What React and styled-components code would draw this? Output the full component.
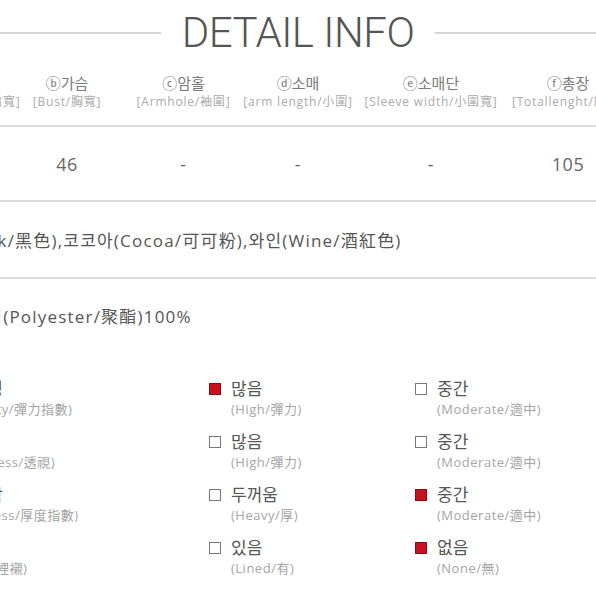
import React from 'react';
import styled, { createGlobalStyle } from 'styled-components';

const GlobalStyle = createGlobalStyle`
  html, body {
    margin: 0;
    padding: 0;
    background: #fff;
    overflow: hidden;
  }
  body {
    font-family: "Open Sans", "Noto Sans CJK KR", sans-serif;
    color: #555;
  }
`;

// the sheet is wider than the window and starts left of it
const Sheet = styled.div`
  width: 736px;
  margin-left: -70px;
`;

const TitleRow = styled.div`
  display: flex;
  align-items: center;
  gap: 21px;
  height: 42px;
  padding-top: 12px;
`;

const Rule = styled.div`
  flex: 1;
  height: 2px;
  background: #d6d6d6;
`;

const Title = styled.h2`
  margin: 0;
  font-family: Roboto, sans-serif;
  font-weight: 300;
  font-size: 42px;
  line-height: 42px;
  letter-spacing: -0.5px;
  color: #555;
`;

const SizeRow = styled.div`
  box-sizing: border-box;
  display: grid;
  grid-template-columns: 72px 118px 115px 114px 152px 122px;
  padding: ${p => p.$pt || 0}px 0 0 6px;
  height: ${p => p.$h}px;
  align-items: center;
  border-bottom: 2px solid #dcdcdc;
`;

const HeadCell = styled.div`
  display: flex;
  flex-direction: column;
  align-items: center;
  white-space: nowrap;
`;

const HeadLabel = styled.span`
  font-size: 15px;
  line-height: 20px;
  color: #7a7a7a;
`;

const HeadSub = styled.span`
  font-size: 12px;
  line-height: 18px;
  letter-spacing: 0.8px;
  color: #aaa;
`;

const Value = styled.div`
  text-align: center;
  font-size: 18px;
  letter-spacing: 0.5px;
  color: #666;
`;

const InfoRow = styled.div`
  display: flex;
  align-items: center;
  height: ${p => p.$h}px;
  font-size: 17px;
  letter-spacing: 1.2px;
  color: #555;
  white-space: nowrap;
  border-bottom: ${p => (p.$last ? 'none' : '2px solid #dcdcdc')};
`;

const InfoText = styled.span`
  margin-left: ${p => p.$shift}px;
`;

const FeelGrid = styled.div`
  display: grid;
  grid-template-columns: 246px 206px 1fr;
  grid-auto-rows: 53px;
  padding: 27px 0 0 33px;
`;

const TextBlock = styled.div`
  display: flex;
  flex-direction: column;
  white-space: nowrap;
`;

const Category = styled(TextBlock)`
  margin-left: -7px;
`;

const MainText = styled.span`
  font-size: 17px;
  line-height: 22px;
  color: #555;
`;

const SubText = styled.span`
  font-size: 13px;
  line-height: 18px;
  letter-spacing: 0.5px;
  color: #a5a5a5;
`;

const CategorySub = styled(SubText)`
  margin-left: -9px;
`;

const Option = styled.div`
  display: flex;
  align-items: flex-start;
  gap: 10px;
`;

const Box = styled.span`
  box-sizing: border-box;
  width: 12px;
  height: 12px;
  margin-top: 5px;
  flex: none;
  border: 1.5px solid ${p => (p.$on ? '#8e0a14' : '#777')};
  background: ${p => (p.$on ? '#c8101e' : '#fff')};
`;

const heads = [
  ['ⓐ어깨', '[Shoulder/肩寬]'],
  ['ⓑ가슴', '[Bust/胸寬]'],
  ['ⓒ암홀', '[Armhole/袖圍]'],
  ['ⓓ소매', '[arm length/小圍]'],
  ['ⓔ소매단', '[Sleeve width/小圍寬]'],
  ['ⓕ총장', '[Totallenght/總長]'],
];

const values = ['-', '46', '-', '-', '-', '105'];

const feel = [
  {
    name: '신축성', sub: '(Elasticity/彈力指數)',
    a: { on: true, t: '많음', s: '(High/彈力)' },
    b: { on: false, t: '중간', s: '(Moderate/適中)' },
  },
  {
    name: '비침', sub: '(Sheerness/透視)',
    a: { on: false, t: '많음', s: '(High/彈力)' },
    b: { on: false, t: '중간', s: '(Moderate/適中)' },
  },
  {
    name: '두께감', sub: '(Thickness/厚度指數)',
    a: { on: false, t: '두꺼움', s: '(Heavy/厚)' },
    b: { on: true, t: '중간', s: '(Moderate/適中)' },
  },
  {
    name: '안감', sub: '(Lining/裡襯)',
    a: { on: false, t: '있음', s: '(Lined/有)' },
    b: { on: true, t: '없음', s: '(None/無)' },
  },
];

function Choice({ on, t, s }) {
  return (
    <Option>
      <Box $on={on} />
      <TextBlock>
        <MainText>{t}</MainText>
        <SubText>{s}</SubText>
      </TextBlock>
    </Option>
  );
}

export default function App() {
  return (
    <>
      <GlobalStyle />
      <Sheet>
        <TitleRow>
          <Rule />
          <Title>DETAIL INFO</Title>
          <Rule />
        </TitleRow>

        <SizeRow $h={73} $pt={4}>
          {heads.map(([label, sub]) => (
            <HeadCell key={label}>
              <HeadLabel>{label}</HeadLabel>
              <HeadSub>{sub}</HeadSub>
            </HeadCell>
          ))}
        </SizeRow>

        <SizeRow $h={75}>
          {values.map((v, i) => (
            <Value key={i}>{v}</Value>
          ))}
        </SizeRow>

        <InfoRow $h={75}>
          <InfoText $shift={-10}>블랙(Black/黑色),코코아(Cocoa/可可粉),와인(Wine/酒紅色)</InfoText>
        </InfoRow>
        <InfoRow $h={72} $last>
          <InfoText $shift={-11}>폴리에스터(Polyester/聚酯)100%</InfoText>
        </InfoRow>

        <FeelGrid>
          {feel.map(row => (
            <React.Fragment key={row.name}>
              <Category>
                <MainText>{row.name}</MainText>
                <CategorySub>{row.sub}</CategorySub>
              </Category>
              <Choice {...row.a} />
              <Choice {...row.b} />
            </React.Fragment>
          ))}
        </FeelGrid>
      </Sheet>
    </>
  );
}
